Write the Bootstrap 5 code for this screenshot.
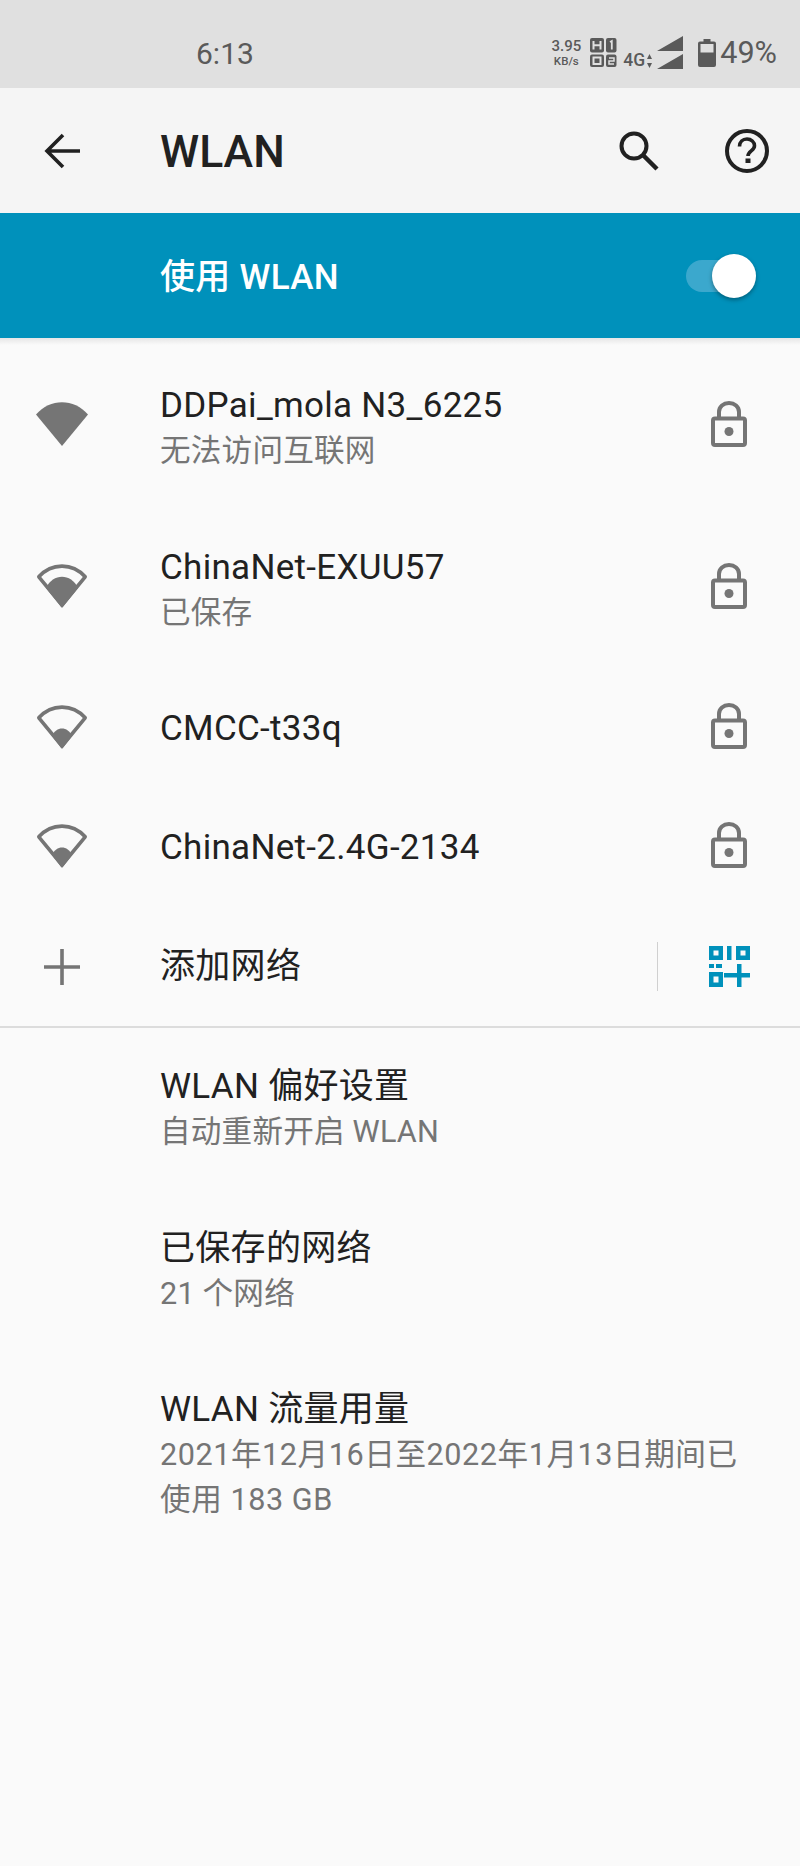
<!DOCTYPE html>
<html lang="zh-CN">
<head>
  <meta charset="UTF-8">
  <title>WLAN</title>
  <link href="https://cdn.jsdelivr.net/npm/bootstrap@5.3.0/dist/css/bootstrap.min.css" rel="stylesheet">
  <style>
    body {
      background-color: #fafafa;
      font-family: Roboto, "Noto Sans CJK SC", sans-serif;
      color: #212121;
      min-height: 1866px;
    }
    /* status bar */
    .status-bar { height: 88px; background-color: #e0e0e0; color: #5a5a5a; padding-left: 196px; padding-right: 23px; padding-top: 18px; }
    .status-time { font-size: 30px; }
    .speed { width: 34px; margin-right: 7px; text-align: center; font-weight: 500; }
    .speed-top { font-size: 15px; line-height: 16px; }
    .speed-bottom { font-size: 11.5px; line-height: 14px; }
    .net-4g { font-size: 17.5px; font-weight: 500; line-height: 1; margin-top: 16px; margin-left: 6px; }
    .status-pct { font-size: 30.6px; line-height: 1; }
    .net-arrows { margin-top: 16px; margin-left: 2px; }
    .battery { margin-left: 14px; }
    /* app bar */
    .app-bar { height: 125px; background-color: #f5f5f5; }
    .app-title { font-size: 44.5px; font-weight: 500; margin-left: 36px; margin-top: 4px; line-height: 1; }
    .ico-col { width: 124px; flex-shrink: 0; }
    .search-ico { margin-right: 66px; }
    .help-ico { margin-right: 31px; }
    /* master switch */
    .master { height: 125px; background-color: #0091bb; color: #fff; }
    .master-label { font-size: 35px; font-weight: 500; margin-left: 36px; margin-top: 6px; letter-spacing: .3px; }
    .sw-track { position: relative; width: 60px; height: 32px; border-radius: 16px; background-color: #3ba8cd; margin-right: 54px; }
    .sw-knob { position: absolute; right: -10px; top: -6px; width: 44px; height: 44px; border-radius: 50%; background-color: #fff; box-shadow: 0 2px 4px rgba(0,0,0,.35); }
    .master-shadow { height: 7px; background: linear-gradient(#e6e6e6, #fafafa); }
    /* rows */
    .wifi-list { --bs-list-group-bg: transparent; --bs-list-group-border-width: 0; --bs-list-group-item-padding-x: 0; --bs-list-group-item-padding-y: 0; --bs-list-group-color: #212121; }
    .wifi-row { height: 119px; }
    .wifi-row.tall { height: 162px; }
    .wifi-row.tall .row-text { padding-top: 4px; }
    .wifi-ico { margin-bottom: 4px; }
    .row-text { margin-left: 36px; flex-grow: 1; }
    .row-title { font-size: 35px; line-height: 45px; letter-spacing: .3px; }
    .row-sub { font-size: 30.6px; line-height: 45px; color: #757575; letter-spacing: .2px; }
    .row-end { width: 36px; margin-right: 53px; margin-bottom: 5px; flex-shrink: 0; }
    .add-sep { width: 1px; height: 49px; background-color: #d0d0d0; margin-right: 51px; }
    .qr-end { margin-right: 50px; }
    .list-rule { height: 2px; background-color: #dcdcdc; border: 0; margin: 0; opacity: 1; }
    .pref-row { height: 162px; }
    .pref-row .row-text { margin-top: -1px; }
    .pref-last { padding-top: 35px; }
    .pref-wrap { width: 590px; letter-spacing: .55px; }
  </style>
</head>
<body>
  <svg width="0" height="0" class="d-block">
    <defs>
      <symbol id="lock" viewBox="0 0 36 46">
        <path d="M8 18V11C8 5.500 12.500 2 18 2s10 3.500 10 9v7" fill="none" stroke="#757575" stroke-width="4"/>
        <rect x="2" y="17.500" width="32" height="26.500" rx="2" fill="none" stroke="#757575" stroke-width="4"/>
        <ellipse cx="18" cy="30.500" rx="4.500" ry="4.500" fill="#757575"/>
      </symbol>
      <symbol id="wifi-outline" viewBox="0 0 52 44">
        <path d="M26 41 2.800 12.800C15.500 -1.500 36.500 -1.500 49.200 12.800Z" fill="none" stroke="#757575" stroke-width="3.600" stroke-linejoin="round"/>
      </symbol>
    </defs>
  </svg>

  <!-- status bar -->
  <div class="status-bar d-flex align-items-center justify-content-between">
    <span class="status-time">6:13</span>
    <div class="d-flex align-items-center">
      <div class="speed">
        <div class="speed-top">3.95</div>
        <div class="speed-bottom">KB/s</div>
      </div>
      <svg width="27" height="30" viewBox="0 0 27 30" class="flex-shrink-0">
        <rect x="0" y="0" width="14" height="14.500" rx="2" fill="#5a5a5a"/>
        <rect x="0" y="16.500" width="14" height="12.500" rx="2" fill="#5a5a5a"/>
        <rect x="16" y="0" width="10.500" height="14.500" rx="2" fill="#5a5a5a"/>
        <rect x="16" y="16.500" width="10.500" height="12.500" rx="2" fill="#5a5a5a"/>
        <path d="M3.500 3v8.500M10.500 3v8.500M3.500 7.200h7" stroke="#e0e0e0" stroke-width="2" fill="none"/>
        <rect x="3.500" y="19.500" width="7" height="6.500" fill="none" stroke="#e0e0e0" stroke-width="2"/>
        <path d="M20 4l1.800-1v8.500" stroke="#e0e0e0" stroke-width="1.800" fill="none"/>
        <path d="M19 20h5v3h-5v3h5" stroke="#e0e0e0" stroke-width="1.500" fill="none"/>
      </svg>
      <span class="net-4g">4G</span>
      <svg width="5" height="14" viewBox="0 0 5 14" class="flex-shrink-0 net-arrows">
        <path d="M2.500 0 5 5H0ZM2.500 14 0 9h5Z" fill="#5a5a5a"/>
      </svg>
      <svg width="28" height="34" viewBox="0 0 28 34" class="flex-shrink-0 ms-1">
        <path d="M27 0V15H1ZM27 18V33H1Z" fill="#5a5a5a"/>
      </svg>
      <svg width="18" height="28" viewBox="0 0 18 28" class="flex-shrink-0 battery">
        <path d="M5.500 0h7v2.500H16a2 2 0 0 1 2 2V26a2 2 0 0 1-2 2H2a2 2 0 0 1-2-2V4.500a2 2 0 0 1 2-2h3.500Z" fill="#5a5a5a"/>
        <rect x="2.500" y="5" width="13" height="8.500" fill="#e0e0e0"/>
      </svg>
      <span class="status-pct ms-1">49%</span>
    </div>
  </div>

  <!-- app bar -->
  <div class="app-bar d-flex align-items-center">
    <div class="ico-col d-flex justify-content-center">
      <svg width="36" height="36" viewBox="0 0 36 36">
        <path d="M36 18H3M19 2 3 18l16 16" fill="none" stroke="#212121" stroke-width="3.600"/>
      </svg>
    </div>
    <span class="app-title flex-grow-1">WLAN</span>
    <svg width="40" height="40" viewBox="0 0 40 40" class="search-ico flex-shrink-0">
      <circle cx="15" cy="15" r="12.500" fill="none" stroke="#212121" stroke-width="4"/>
      <path d="M24 24 38 38" stroke="#212121" stroke-width="4.500"/>
    </svg>
    <svg width="44" height="44" viewBox="0 0 44 44" class="help-ico flex-shrink-0">
      <circle cx="22" cy="22" r="20" fill="none" stroke="#212121" stroke-width="4"/>
      <path d="M14.500 17.500c0-4.500 3.300-7.500 7.500-7.500s7.500 3 7.500 6.800c0 5-6.500 5.200-6.500 10.200" fill="none" stroke="#212121" stroke-width="3.600"/>
      <rect x="20.500" y="29.500" width="5" height="4.500" fill="#212121"/>
    </svg>
  </div>

  <!-- master switch -->
  <div class="master d-flex align-items-center">
    <div class="ico-col"></div>
    <span class="master-label flex-grow-1">使用 WLAN</span>
    <div class="sw-track"><div class="sw-knob"></div></div>
  </div>
  <div class="master-shadow"></div>

  <!-- networks -->
  <div class="list-group list-group-flush wifi-list">
    <div class="list-group-item wifi-row tall d-flex align-items-center">
      <div class="ico-col d-flex justify-content-center">
        <svg class="wifi-ico" width="52" height="44" viewBox="0 0 52 44"><path d="M26 44 0 12.500C14-4 38-4 52 12.500Z" fill="#757575"/></svg>
      </div>
      <div class="row-text">
        <div class="row-title">DDPai_mola N3_6225</div>
        <div class="row-sub">无法访问互联网</div>
      </div>
      <svg class="row-end" height="46" viewBox="0 0 36 46"><use href="#lock"/></svg>
    </div>
    <div class="list-group-item wifi-row tall d-flex align-items-center">
      <div class="ico-col d-flex justify-content-center">
        <svg class="wifi-ico" width="52" height="44" viewBox="0 0 52 44">
          <use href="#wifi-outline"/>
          <path d="M26 44 10 24C17 9 35 9 42 24Z" fill="#757575"/>
        </svg>
      </div>
      <div class="row-text">
        <div class="row-title">ChinaNet-EXUU57</div>
        <div class="row-sub">已保存</div>
      </div>
      <svg class="row-end" height="46" viewBox="0 0 36 46"><use href="#lock"/></svg>
    </div>
    <div class="list-group-item wifi-row d-flex align-items-center">
      <div class="ico-col d-flex justify-content-center">
        <svg class="wifi-ico" width="52" height="44" viewBox="0 0 52 44">
          <use href="#wifi-outline"/>
          <path d="M26 44 16 31C20 21 32 21 36 31Z" fill="#757575"/>
        </svg>
      </div>
      <div class="row-text"><div class="row-title">CMCC-t33q</div></div>
      <svg class="row-end" height="46" viewBox="0 0 36 46"><use href="#lock"/></svg>
    </div>
    <div class="list-group-item wifi-row d-flex align-items-center">
      <div class="ico-col d-flex justify-content-center">
        <svg class="wifi-ico" width="52" height="44" viewBox="0 0 52 44">
          <use href="#wifi-outline"/>
          <path d="M26 44 16 31C20 21 32 21 36 31Z" fill="#757575"/>
        </svg>
      </div>
      <div class="row-text"><div class="row-title">ChinaNet-2.4G-2134</div></div>
      <svg class="row-end" height="46" viewBox="0 0 36 46"><use href="#lock"/></svg>
    </div>
    <div class="list-group-item wifi-row d-flex align-items-center">
      <div class="ico-col d-flex justify-content-center">
        <svg width="36" height="36" viewBox="0 0 36 36"><path d="M18 0V36M0 18H36" stroke="#757575" stroke-width="3.600"/></svg>
      </div>
      <div class="row-text"><div class="row-title">添加网络</div></div>
      <div class="add-sep"></div>
      <svg width="41" height="41" viewBox="0 0 41 41" class="qr-end flex-shrink-0">
        <g fill="none" stroke="#0091bb" stroke-width="4.500">
          <rect x="2.250" y="2.250" width="9.500" height="9.500"/>
          <rect x="29.250" y="2.250" width="9.500" height="9.500"/>
          <rect x="2.250" y="28.250" width="9.500" height="10.500"/>
        </g>
        <path d="M18 0h4.500v14H18ZM0 18h5v4H0ZM7 18h6v4H7ZM28 18h4.500v9H41v4.500h-8.500V41H28v-9.500H15V27h13Z" fill="#0091bb"/>
      </svg>
    </div>
  </div>
  <hr class="list-rule">

  <!-- preferences -->
  <div class="list-group list-group-flush wifi-list">
    <div class="list-group-item pref-row d-flex align-items-center">
      <div class="ico-col"></div>
      <div class="row-text">
        <div class="row-title">WLAN 偏好设置</div>
        <div class="row-sub">自动重新开启 WLAN</div>
      </div>
    </div>
    <div class="list-group-item pref-row d-flex align-items-center">
      <div class="ico-col"></div>
      <div class="row-text">
        <div class="row-title">已保存的网络</div>
        <div class="row-sub">21 个网络</div>
      </div>
    </div>
    <div class="list-group-item d-flex pref-last">
      <div class="ico-col"></div>
      <div class="row-text">
        <div class="row-title">WLAN 流量用量</div>
        <div class="row-sub pref-wrap">2021年12月16日至2022年1月13日期间已使用 183 GB</div>
      </div>
    </div>
  </div>

  <script src="https://cdn.jsdelivr.net/npm/bootstrap@5.3.0/dist/js/bootstrap.bundle.min.js"></script>
</body>
</html>
